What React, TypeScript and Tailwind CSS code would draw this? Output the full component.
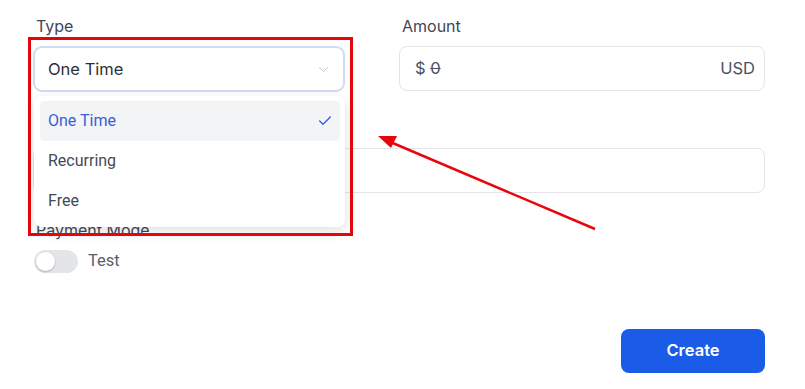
import { Check, ChevronDown } from "lucide-react";

const options = ["One Time", "Recurring", "Free"];

function Label({ children }: { children?: React.ReactNode }) {
  return <div className="h-[20px] text-[16px] leading-[20px] text-[#3f4754] mb-[10px]">{children}</div>;
}

export default function App() {
  return (
    <div className="relative w-[805px] h-[389px] bg-white overflow-hidden font-['Inter',sans-serif]">
      <div className="pt-[16px] pl-[33px] pr-[40px]">
        <div className="grid grid-cols-[312px_366px] gap-x-[54px]">
          <div>
            <div className="pl-[3px]">
              <Label>Type</Label>
            </div>
            <div className="h-[46px] rounded-[9px] border-2 border-[#cfdaf3] flex items-center justify-between pl-[13px] pr-[11px] text-[16.5px] text-[#2a2f38]">
              <span>One Time</span>
              <ChevronDown className="w-[17px] h-[17px] text-[#b8bcc4]" strokeWidth={1.2} />
            </div>
          </div>
          <div>
            <div className="pl-[3px]">
              <Label>Amount</Label>
            </div>
            <div className="h-[45px] mt-[1px] rounded-[8px] border border-[#e3e5e9] flex items-center justify-between pl-[15px] pr-[9px] text-[16.5px] text-[#4b5260]">
              <span>
                $ <span className="line-through">0</span>
              </span>
              <span>USD</span>
            </div>
          </div>
        </div>

        {/* second field, its label sits under the open dropdown */}
        <div className="mt-[26px]">
          <Label />
          <div className="h-[45px] rounded-[8px] border border-[#e3e5e9]" />
        </div>

        <div className="mt-[27px]">
          <div className="pl-[3px]">
            <Label>Payment Mode</Label>
          </div>
          <div className="flex items-center gap-[10px] pl-[1px] -mt-[1px]">
            <div className="w-[44px] h-[23px] rounded-full bg-[#e4e5e8] p-[2px] flex items-center">
              <div className="w-[19px] h-[19px] rounded-full bg-white shadow-[0_1px_2px_rgba(0,0,0,0.25)]" />
            </div>
            <span className="font-['Roboto',sans-serif] text-[16.5px] text-[#5a606b]">Test</span>
          </div>
        </div>

        <div className="flex justify-end mt-[55px]">
          <button className="w-[144px] h-[44px] rounded-[8px] bg-[#1a5be8] text-white text-[16.5px] font-semibold">
            Create
          </button>
        </div>
      </div>

      <div className="absolute left-[34px] top-[96px] w-[311px] h-[131px] bg-white rounded-[8px] shadow-[0_4px_14px_rgba(0,0,0,0.12)] p-[5px_5px_6px_6px] font-['Roboto',sans-serif]">
        {options.map((o, i) => (
          <div
            key={o}
            className={
              i === 0
                ? "h-[40px] flex items-center justify-between pl-[8px] pr-[7px] rounded-[4px] bg-[#f3f4f6] text-[16px] text-[#3460d9]"
                : "h-[40px] flex items-center justify-between pl-[8px] pr-[7px] text-[16px] text-[#444a55]"
            }
          >
            <span>{o}</span>
            {i === 0 && <Check className="w-[16px] h-[16px] text-[#3460d9]" strokeWidth={2} />}
          </div>
        ))}
      </div>

      <div className="absolute left-[28px] top-[37px] w-[325px] h-[199px] border-[3px] border-[#e3060c]" />

      <svg className="absolute left-0 top-0" width="805" height="389" viewBox="0 0 805 389">
        <line x1="595" y1="229" x2="388" y2="141" stroke="#e8060c" strokeWidth="2.5" />
        <polygon points="378,136 397,136 391,148" fill="#e8060c" />
      </svg>
    </div>
  );
}
